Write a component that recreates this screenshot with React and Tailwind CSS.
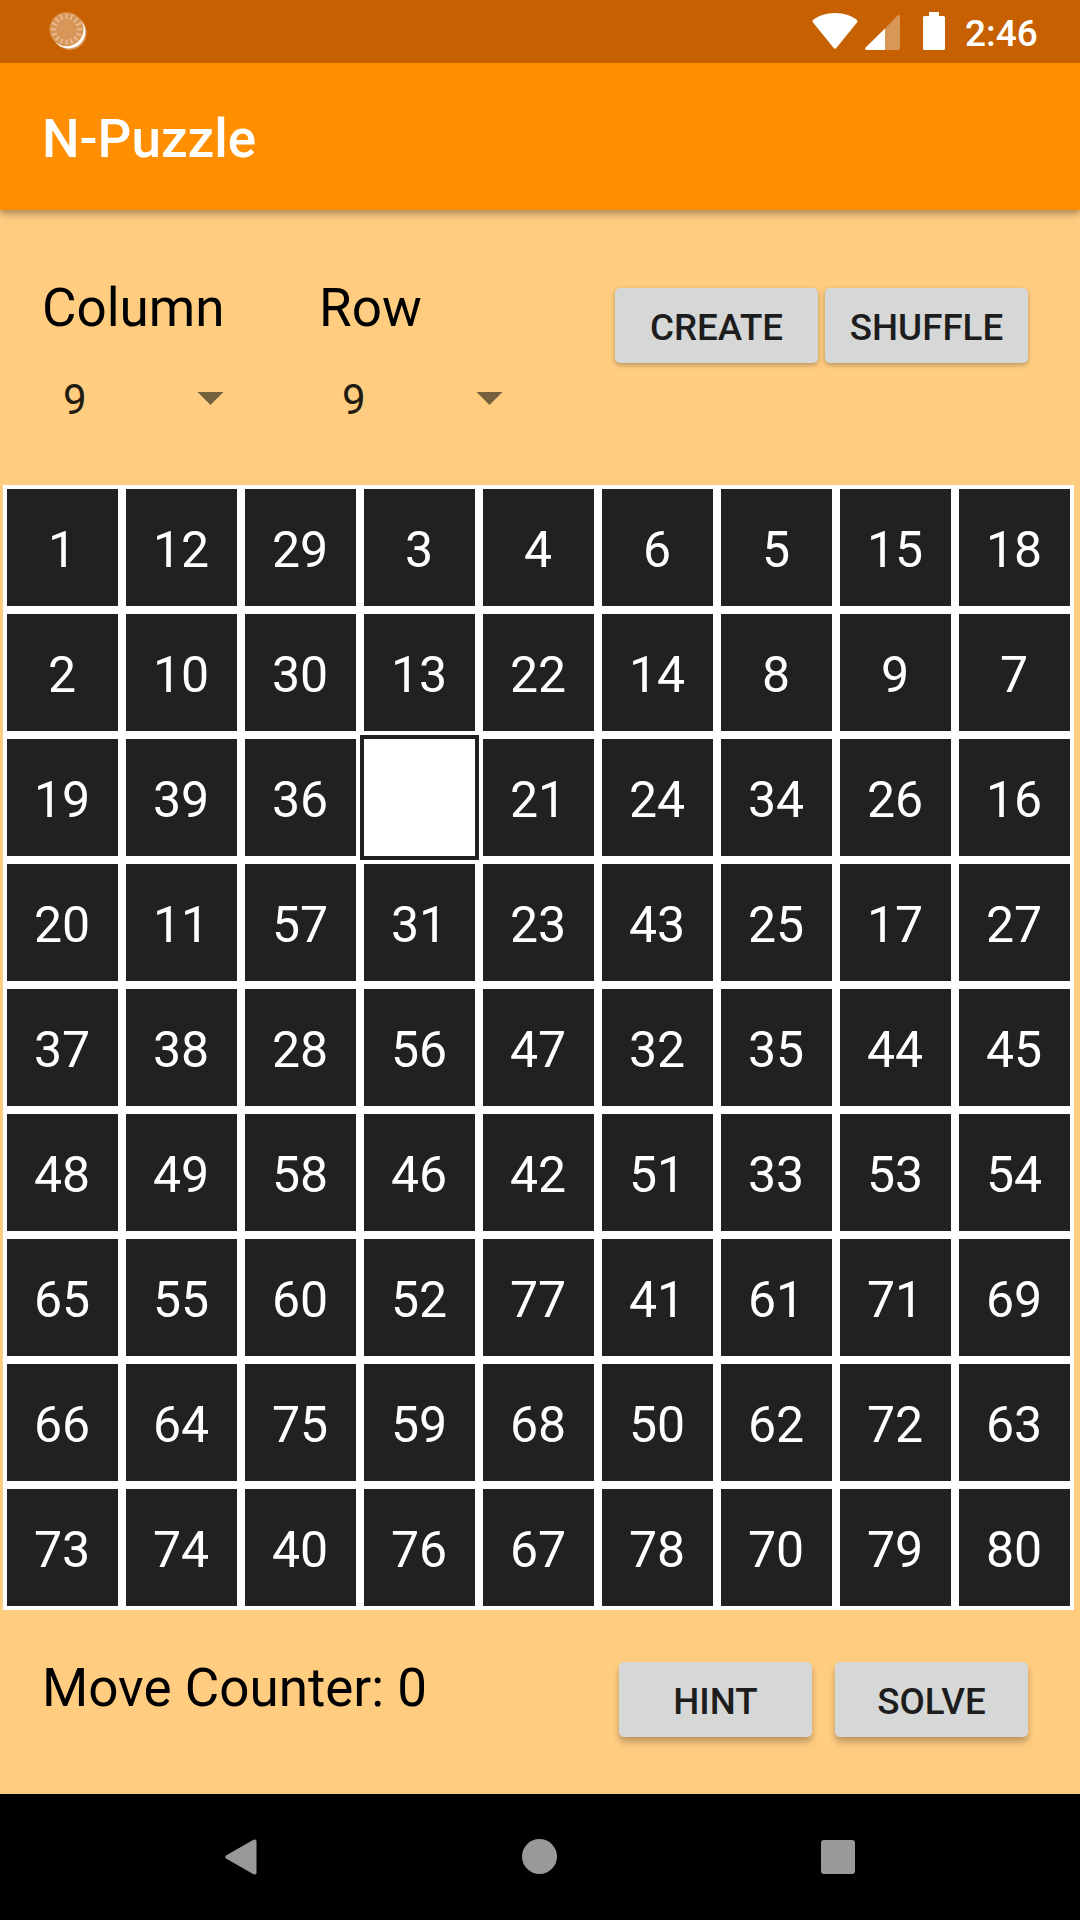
const ROWS = [
  [1, 12, 29, 3, 4, 6, 5, 15, 18],
  [2, 10, 30, 13, 22, 14, 8, 9, 7],
  [19, 39, 36, null, 21, 24, 34, 26, 16],
  [20, 11, 57, 31, 23, 43, 25, 17, 27],
  [37, 38, 28, 56, 47, 32, 35, 44, 45],
  [48, 49, 58, 46, 42, 51, 33, 53, 54],
  [65, 55, 60, 52, 77, 41, 61, 71, 69],
  [66, 64, 75, 59, 68, 50, 62, 72, 63],
  [73, 74, 40, 76, 67, 78, 70, 79, 80],
];

const TICKS = Array.from({ length: 16 }, (_, i) => i * 22.5);

function StatusBar() {
  return (
    <div className="relative z-20 flex h-[63px] items-start bg-[#c66000] pl-[49px] text-white">
      <svg className="mt-[12px] h-[39px] w-[39px]" viewBox="0 0 39 39">
        <circle cx="20.7" cy="20.9" r="17" fill="#d99659" />
        <circle cx="19.6" cy="19.6" r="16.8" fill="#fff" />
        <circle cx="17.5" cy="17.3" r="17" fill="#d99659" />
        {TICKS.map((a) => (
          <path key={a} d="M17.5 1.600V7" stroke="#e8c09b" strokeWidth="1.6" transform={`rotate(${a} 17.5 17.3)`} />
        ))}
      </svg>
      <svg className="mt-[13px] ml-[724px] h-[37px] w-[46px]" viewBox="0 0 46 37">
        <path d="M23 0C13.500 0 6 3 1 7Q0 8 .8 9.200L21.500 34.800Q23 36.800 24.500 34.800L45.200 9.200Q46 8 45 7C40 3 32.500 0 23 0Z" fill="#fff" />
      </svg>
      <svg className="mt-[14px] ml-[7px] h-[36px] w-[35px]" viewBox="0 0 35 36">
        <path d="M20 14.500L32.600 1.600Q35 0 35 2.500V34Q35 36 33 36H20Z" fill="#d99659" />
        <path d="M20 14.500V36H1.500Q-1 35.500 .6 33.600Z" fill="#fff" />
      </svg>
      <svg className="mt-[12px] ml-[23px] h-[38px] w-[22px]" viewBox="0 0 22 38">
        <path d="M6 0H16V4H20.500Q22 4 22 5.500V36.500Q22 38 20.500 38H1.500Q0 38 0 36.500V5.500Q0 4 1.500 4H6Z" fill="#fff" />
      </svg>
      <span className="mt-[12px] ml-[20px] text-[37px] leading-[43px] font-medium">2:46</span>
    </div>
  );
}

function Spinner({ label, value, className }) {
  return (
    <div className={className}>
      <div className="text-[53px] leading-[62px] text-black">{label}</div>
      <div className="mt-[29px] flex h-[63px] items-center pl-[21px]">
        <span className="w-[134px] text-[42px] leading-[50px] text-[#211b12]">{value}</span>
        <svg className="mb-[2px] h-[13px] w-[27px]" viewBox="0 0 27 13">
          <path d="M.5 0H26.500L13.500 13Z" fill="#75603c" />
        </svg>
      </div>
    </div>
  );
}

function Button({ children, className }) {
  return (
    <button
      className={`flex h-[75px] items-center justify-center rounded-[5px] bg-[#d6d7d7] pt-[4px] text-[36.75px] leading-[43px] font-medium text-[#1d1d1d] ${className}`}
    >
      {children}
    </button>
  );
}

function Tile({ value }) {
  if (value === null) return <div className="border-4 border-[#212121] bg-white" />;
  return (
    <div className="flex items-center justify-center border-4 border-white bg-[#212121] pt-[4px] pr-[1px] text-[50px] leading-[60px] text-white">
      {value}
    </div>
  );
}

export default function App() {
  return (
    <div className="flex h-[1920px] w-[1080px] flex-col overflow-hidden bg-[#ffcc80] font-[Roboto,sans-serif]">
      <StatusBar />
      <header className="z-10 flex h-[147px] items-center bg-[#ff8f00] pl-[42px] shadow-[0_3px_8px_rgba(0,0,0,0.38)]">
        <h1 className="pt-[5px] text-[53px] leading-[62px] font-medium text-white">N-Puzzle</h1>
      </header>

      <section className="flex h-[275px] pt-[67px] pl-[42px]">
        <Spinner label="Column" value="9" className="w-[277px]" />
        <Spinner label="Row" value="9" className="w-[296px] [&>div:last-child]:pl-[23px]" />
        <div className="mt-[11px] flex gap-[7px]">
          <Button className="w-[203px] shadow-[0_2px_5px_rgba(0,0,0,0.28)]">CREATE</Button>
          <Button className="w-[203px] shadow-[0_2px_5px_rgba(0,0,0,0.28)]">SHUFFLE</Button>
        </div>
      </section>

      <main className="ml-[3px] grid h-[1125px] w-[1071px] grid-cols-9 grid-rows-9">
        {ROWS.flat().map((v, i) => (
          <Tile key={i} value={v} />
        ))}
      </main>

      <section className="flex h-[184px] pl-[42px]">
        <div className="mt-[47px] w-[577px] text-[53px] leading-[62px] text-black">Move Counter: 0</div>
        <div className="mt-[52px] flex gap-[23px]">
          <Button className="w-[193px] shadow-[0_5px_6px_rgba(0,0,0,0.26)]">HINT</Button>
          <Button className="w-[193px] shadow-[0_5px_6px_rgba(0,0,0,0.26)]">SOLVE</Button>
        </div>
      </section>

      <nav className="flex h-[126px] items-center bg-black pl-[225px]">
        <svg className="h-[36px] w-[32px]" viewBox="0 0 32 36">
          <path d="M1 16.500L28.500 .8Q31.500 0 31.500 2.500V33.500Q31.500 36 28.500 35.200L1 19.500Q-.5 18 1 16.500Z" fill="#999" />
        </svg>
        <div className="mb-px ml-[265px] size-[35px] rounded-full bg-[#999]" />
        <div className="ml-[264px] size-[34px] rounded-[3px] bg-[#999]" />
      </nav>
    </div>
  );
}
